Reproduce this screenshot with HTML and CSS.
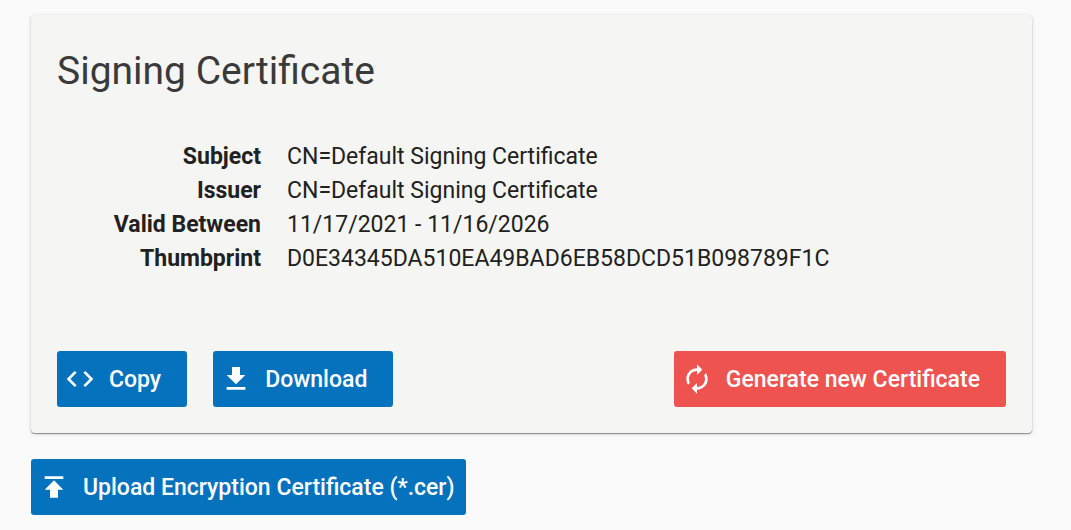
FILE: index.html
```html
<!DOCTYPE html>
<html lang="en">

<head>
    <meta charset="UTF-8">
    <meta name="viewport" content="width=device-width, initial-scale=1.0">
    <title>Signing Certificate</title>
    <link rel="stylesheet" href="styles.css">
</head>

<body>
    <section class="card">
        <h1 class="card-title">Signing Certificate</h1>
        <dl class="details">
            <dt>Subject</dt>
            <dd>CN=Default Signing Certificate</dd>
            <dt>Issuer</dt>
            <dd>CN=Default Signing Certificate</dd>
            <dt>Valid Between</dt>
            <dd>11/17/2021 - 11/16/2026</dd>
            <dt>Thumbprint</dt>
            <dd>D0E34345DA510EA49BAD6EB58DCD51B098789F1C</dd>
        </dl>
        <div class="actions">
            <button type="button" class="btn">
                <svg class="icon" viewBox="0 0 24 24"><path d="M9.400 16.600 4.800 12l4.600-4.600L8 6l-6 6 6 6 1.400-1.400zm5.200 0 4.600-4.600-4.600-4.600L16 6l6 6-6 6-1.400-1.400z" /></svg>
                Copy
            </button>
            <button type="button" class="btn">
                <svg class="icon" viewBox="0 0 24 24"><path d="M19 9h-4V3H9v6H5l7 7 7-7zM5 18v2h14v-2H5z" /></svg>
                Download
            </button>
            <button type="button" class="btn btn-warn">
                <svg class="icon" viewBox="0 0 24 24"><path d="M12 6v3l4-4-4-4v3c-4.420 0-8 3.580-8 8 0 1.570.46 3.030 1.240 4.260L6.700 14.800A5.870 5.870 0 0 1 6 12c0-3.310 2.690-6 6-6zm6.760 1.740L17.300 9.200c.44.84.7 1.790.7 2.800 0 3.310-2.690 6-6 6v-3l-4 4 4 4v-3c4.420 0 8-3.580 8-8 0-1.570-.46-3.030-1.240-4.260z" /></svg>
                Generate new Certificate
            </button>
        </div>
    </section>
    <button type="button" class="btn btn-upload">
        <svg class="icon" viewBox="0 0 24 24"><path d="M5 4v2h14V4H5zm0 10h4v6h6v-6h4l-7-7-7 7z" /></svg>
        Upload Encryption Certificate (*.cer)
    </button>
</body>

</html>
```
FILE: styles.css
```css
body {
    margin: 0;
    padding: 15px 39px 15px 31px;
    background: #fafafa;
    color: #212121;
    font-family: Roboto, sans-serif;
    font-size: 23px;
}

.card {
    margin-bottom: 26px;
    padding: 26px;
    border-radius: 4px;
    background: #f5f5f3;
    box-shadow: 0 1px 1px rgba(0, 0, 0, 0.4), 0 1px 4px rgba(0, 0, 0, 0.14);
}

.card-title {
    margin: 0 0 39px;
    color: #3a3a3a;
    font-size: 39px;
    font-weight: 400;
    line-height: 60px;
}

.details {
    display: grid;
    grid-template-columns: 204px 1fr;
    column-gap: 26px;
    margin: 0 0 75px;
    line-height: 34px;
}

.details dt {
    font-weight: 700;
    text-align: right;
}

.details dd {
    margin: 0;
}

.actions {
    display: flex;
    gap: 26px;
}

.btn {
    display: inline-flex;
    align-items: center;
    gap: 13px;
    height: 56px;
    padding: 0 26px 0 7px;
    border: 0;
    border-radius: 3px;
    background: #0572bd;
    color: #fff;
    font: 500 23px Roboto, sans-serif;
}

.btn-warn {
    margin-left: auto;
    background: #ef5350;
}

.btn-upload {
    padding-right: 11px;
}

.icon {
    width: 32px;
    height: 32px;
    fill: currentColor;
}
```
